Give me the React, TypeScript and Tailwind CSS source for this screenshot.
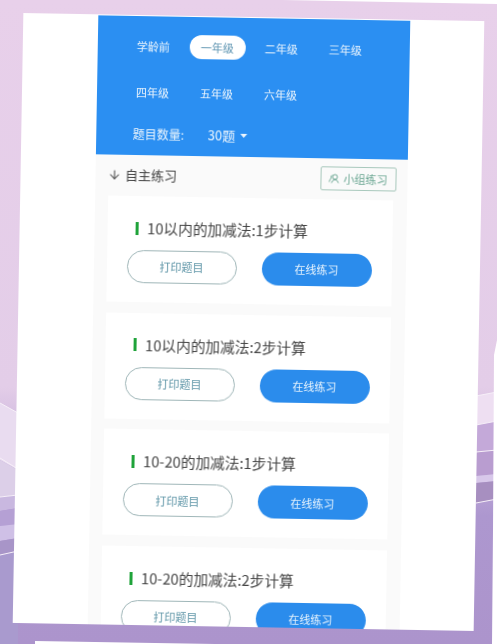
import { ArrowDown } from 'lucide-react'

const gradesTop = ['学龄前', '一年级', '二年级', '三年级']
const gradesBottom = ['四年级', '五年级', '六年级']
const exercises = ['10以内的加减法:1步计算', '10以内的加减法:2步计算', '10-20的加减法:1步计算', '10-20的加减法:2步计算']

function Backdrop() {
  return (
    <svg className="absolute inset-0" width="497" height="644" viewBox="0 0 497 644">
      <defs>
        <linearGradient id="bg" x1="0" y1="0" x2="0" y2="1">
          <stop offset="0" stopColor="#e8d0ea" />
          <stop offset="0.6" stopColor="#e3cde8" />
          <stop offset="0.8" stopColor="#ad97cf" />
          <stop offset="1" stopColor="#ac94cc" />
        </linearGradient>
      </defs>
      <rect width="497" height="644" fill="url(#bg)" />
      {/* left wave bands */}
      <path d="M0 403 L18 413 L18 470 L0 460 Z" fill="#e9dcf0" />
      <path d="M0 460 L18 470 L18 495 L0 497 Z" fill="#dccfe8" />
      <path d="M0 497 L18 495 L18 508 L0 511 Z" fill="#c9b8e0" />
      <path d="M0 511 L18 508 L18 524 L0 526 Z" fill="#b5a0d4" />
      <path d="M0 526 L18 524 L18 538 L0 541 Z" fill="#cfc0e6" />
      <path d="M0 541 L18 538 L18 551 L0 555 Z" fill="#a895c8" />
      <path d="M0 555 L18 551 L18 644 L0 644 Z" fill="#a99ace" />
      <path d="M0 403 L18 413 M0 458 L18 469 M0 497 L18 495 M0 555 L18 551" stroke="#f6eff8" strokeWidth="1" fill="none" />
      {/* right wave bands */}
      <path d="M476 396 L497 392 L497 421 L476 425 Z" fill="#eedff2" />
      <path d="M476 425 L497 421 L497 450 L476 452 Z" fill="#c4a9d9" />
      <path d="M476 452 L497 450 L497 474 L476 476 Z" fill="#b99dd0" />
      <path d="M476 476 L497 474 L497 481 L476 483 Z" fill="#d8c8ea" />
      <path d="M476 483 L497 481 L497 499 L476 503 Z" fill="#a78fc0" />
      <path d="M476 396 L497 392 M476 425 L497 421 M476 452 L497 450 M476 503 L497 499" stroke="#f6eff8" strokeWidth="1" fill="none" />
      {/* white scan edges */}
      <path d="M282 0 L497 4 L497 0 Z" fill="#ffffff" />
      <path d="M35 641 L215 644 L35 644 Z" fill="#ffffff" />
      <path d="M497 340 L494 355 L493 530 L492 644 L497 644 Z" fill="#ffffff" />
    </svg>
  )
}

function ExerciseCard({ title }: { title: string }) {
  return (
    <div className="h-[106px] bg-white pl-[20px] pt-[22px]">
      <div className="flex items-center pl-[8px]">
        <span className="h-[13px] w-[3px] bg-[#1fa33a]" />
        <span className="ml-[9px] text-[14.7px] leading-[20px] text-[#444444]">{title}</span>
      </div>
      <div className="mt-[12px] flex gap-[25px]">
        <button className="h-[33px] w-[110px] rounded-full border border-[#9fb6b8] text-[11px] text-[#5c94a6]">打印题目</button>
        <button className="h-[33px] w-[110px] rounded-full bg-[#2b8cec] text-[11px] text-[#e8f4fd]">在线练习</button>
      </div>
    </div>
  )
}

export default function App() {
  return (
    <div className="relative flex h-[644px] w-[497px] items-center justify-center overflow-hidden font-['Noto_Sans_CJK_SC','Noto_Sans',sans-serif]">
      <Backdrop />
      <div className="relative h-[610px] w-[461px] rotate-1 overflow-hidden bg-white blur-[0.3px]">
        <div className="mx-auto mt-px h-full w-[312px] bg-[#fafafa]">
          <div className="h-[139px] bg-[#2b8ff2] text-[11px] text-[#eef6fd]">
            <div className="grid grid-cols-[64px_64px_64px_64px] pl-[24px] pt-[18px]">
              {gradesTop.map((g) => (
                <div key={g} className="flex h-[24px] items-center justify-center">
                  {g === '一年级' ? (
                    <span className="flex h-[24px] w-[56px] items-center justify-center rounded-full bg-white text-[#5b93b0]">{g}</span>
                  ) : (
                    g
                  )}
                </div>
              ))}
            </div>
            <div className="mt-[22px] grid grid-cols-[64px_64px_64px_64px] pl-[24px]">
              {gradesBottom.map((g) => (
                <div key={g} className="flex h-[24px] items-center justify-center">{g}</div>
              ))}
            </div>
            <div className="mt-[18px] flex h-[24px] items-center pl-[37px]">
              <span className="w-[75px] text-[12px]">题目数量:</span>
              <span className="text-[13px]">30题</span>
              <svg className="ml-[5px]" width="7" height="4" viewBox="0 0 7 4">
                <path d="M0 0 H7 L3.5 4 Z" fill="#eef6fd" />
              </svg>
            </div>
          </div>
          <div className="flex h-[40px] items-center justify-between pl-[12px] pr-[11px]">
            <div className="flex items-center text-[13px] text-[#444444]">
              <ArrowDown className="h-[14px] w-[14px]" strokeWidth={1.75} />
              <span className="ml-[4px]">自主练习</span>
            </div>
            <div className="flex h-[24px] w-[76px] items-center justify-center rounded-[2px] border border-[#a8c8bc] text-[11px] text-[#6aa692]">
              <svg className="mr-[4px]" width="11" height="11" viewBox="0 0 11 11" fill="none" stroke="#6aa692" strokeWidth="1">
                <circle cx="6.5" cy="3.5" r="2.4" />
                <path d="M3 9.5 Q4 6.5 6.5 6 Q9 6.5 10 9.5" />
                <path d="M3.8 1.6 Q2 2.6 2.6 4.8 Q1 6.5 0.8 8.5" />
              </svg>
              小组练习
            </div>
          </div>
          <div className="mt-[1px] flex flex-col gap-[10.7px] pl-[13px] pr-[14px]">
            {exercises.map((t) => (
              <ExerciseCard key={t} title={t} />
            ))}
          </div>
        </div>
      </div>
    </div>
  )
}
